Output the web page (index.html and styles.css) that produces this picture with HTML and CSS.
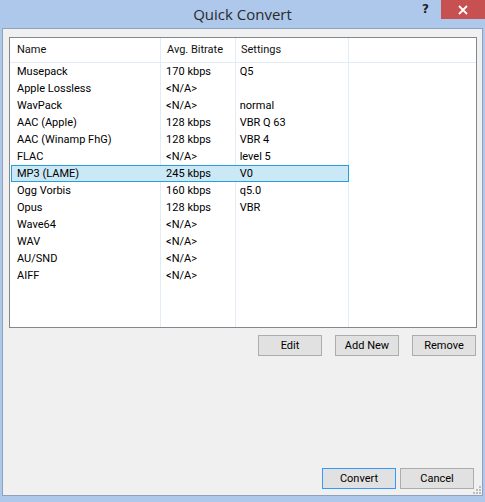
FILE: index.html
```html
<!DOCTYPE html>
<html>
<head>
<meta charset="utf-8">
<title>Quick Convert</title>
<link rel="stylesheet" href="styles.css">
</head>
<body>
<div class="window">
  <div class="titlebar">
    <div class="title">Quick Convert</div>
    <div class="controls">
      <span class="help">?</span>
      <span class="close">
        <svg width="10" height="10" viewBox="0 0 10 10"><path d="M1 1 L9 9 M9 1 L1 9" stroke="#fff" stroke-width="1.8" fill="none"/></svg>
      </span>
    </div>
  </div>
  <div class="client">
    <div class="list">
      <div class="row header">
        <div class="cell c1">Name</div>
        <div class="cell c2">Avg. Bitrate</div>
        <div class="cell c3">Settings</div>
      </div>
      <div class="row"><div class="cell c1">Musepack</div><div class="cell c2">170 kbps</div><div class="cell c3">Q5</div></div>
      <div class="row"><div class="cell c1">Apple Lossless</div><div class="cell c2">&lt;N/A&gt;</div><div class="cell c3"></div></div>
      <div class="row"><div class="cell c1">WavPack</div><div class="cell c2">&lt;N/A&gt;</div><div class="cell c3">normal</div></div>
      <div class="row"><div class="cell c1">AAC (Apple)</div><div class="cell c2">128 kbps</div><div class="cell c3">VBR Q 63</div></div>
      <div class="row"><div class="cell c1">AAC (Winamp FhG)</div><div class="cell c2">128 kbps</div><div class="cell c3">VBR 4</div></div>
      <div class="row"><div class="cell c1">FLAC</div><div class="cell c2">&lt;N/A&gt;</div><div class="cell c3">level 5</div></div>
      <div class="row selected"><div class="cell c1">MP3 (LAME)</div><div class="cell c2">245 kbps</div><div class="cell c3">V0</div></div>
      <div class="row"><div class="cell c1">Ogg Vorbis</div><div class="cell c2">160 kbps</div><div class="cell c3">q5.0</div></div>
      <div class="row"><div class="cell c1">Opus</div><div class="cell c2">128 kbps</div><div class="cell c3">VBR</div></div>
      <div class="row"><div class="cell c1">Wave64</div><div class="cell c2">&lt;N/A&gt;</div><div class="cell c3"></div></div>
      <div class="row"><div class="cell c1">WAV</div><div class="cell c2">&lt;N/A&gt;</div><div class="cell c3"></div></div>
      <div class="row"><div class="cell c1">AU/SND</div><div class="cell c2">&lt;N/A&gt;</div><div class="cell c3"></div></div>
      <div class="row"><div class="cell c1">AIFF</div><div class="cell c2">&lt;N/A&gt;</div><div class="cell c3"></div></div>
    </div>
    <div class="actions">
      <button class="btn">Edit</button>
      <button class="btn">Add New</button>
      <button class="btn">Remove</button>
    </div>
    <div class="footer">
      <button class="btn wide default">Convert</button>
      <button class="btn wide">Cancel</button>
    </div>
    <svg class="grip" width="10" height="10" viewBox="0 0 10 10">
      <rect x="7" y="1" width="2" height="2" fill="#bcbcbc"/>
      <rect x="4" y="4" width="2" height="2" fill="#bcbcbc"/>
      <rect x="7" y="4" width="2" height="2" fill="#bcbcbc"/>
      <rect x="1" y="7" width="2" height="2" fill="#bcbcbc"/>
      <rect x="4" y="7" width="2" height="2" fill="#bcbcbc"/>
      <rect x="7" y="7" width="2" height="2" fill="#bcbcbc"/>
    </svg>
  </div>
</div>
</body>
</html>
```
FILE: styles.css
```css
* { box-sizing: border-box; }
html, body { margin: 0; padding: 0; }
body {
  width: 485px;
  height: 502px;
  overflow: hidden;
  font-family: Roboto, "Liberation Sans", sans-serif;
  font-size: 11px;
  color: #000;
}
.window {
  width: 485px;
  height: 502px;
  background: #adc8ea;
  display: flex;
  flex-direction: column;
}
.titlebar {
  height: 28px;
  display: grid;
  grid-template-areas: "all";
  flex: none;
}
.title {
  grid-area: all;
  justify-self: center;
  align-self: center;
  font-family: "Open Sans", "Noto Sans", sans-serif;
  font-size: 15px;
  color: #2a2a2a;
  margin-top: -1px;
}
.controls {
  grid-area: all;
  justify-self: end;
  align-self: start;
  display: flex;
  align-items: flex-start;
}
.help {
  font-family: "DejaVu Sans", sans-serif;
  font-weight: bold;
  font-size: 12px;
  color: #222;
  line-height: 19px;
  margin-right: 12px;
}
.close {
  width: 44px;
  height: 19px;
  background: #c75050;
  display: flex;
  align-items: center;
  justify-content: center;
}
.client {
  flex: 1;
  margin: 0 2px 6px 2px;
  border: 1px solid #8fa2bb;
  background: #f0f0f0;
  display: flex;
  flex-direction: column;
  padding: 8px 5px 0 6px;
  position: relative;
}
.list {
  height: 291px;
  border: 1px solid #828790;
  background-color: #fff;
  background-image:
    linear-gradient(#e3ebf6, #e3ebf6),
    linear-gradient(#e3ebf6, #e3ebf6),
    linear-gradient(#e3ebf6, #e3ebf6);
  background-size: 1px 100%;
  background-repeat: no-repeat;
  background-position: 150px 0, 225px 0, 338px 0;
  flex: none;
}
.row {
  display: flex;
  height: 17px;
  width: 338px;
  margin-left: 1px;
  border: 1px solid transparent;
  line-height: 15px;
}
.row.header {
  height: 25px;
  width: auto;
  margin-left: 0;
  border: none;
  border-bottom: 1px solid #e3ebf6;
  line-height: 24px;
  padding-left: 1px;
  color: #111;
}
.row.selected {
  background: #cbe8f6;
  border-color: #26a0da;
}
.cell { white-space: nowrap; }
.c1 { width: 150px; padding-left: 5px; }
.c2 { width: 75px; padding-left: 5px; }
.c3 { width: 113px; padding-left: 4px; }
.row.header .c1 { padding-left: 6px; }
.row.header .c2 { padding-left: 6px; }
.row.header .c3 { padding-left: 5px; }
.actions {
  display: flex;
  justify-content: flex-end;
  gap: 13px;
  margin-top: 7px;
  margin-right: 1px;
}
.btn {
  width: 64px;
  height: 21px;
  background: #e1e1e1;
  border: 1px solid #adadad;
  border-radius: 0;
  font-family: Roboto, "Liberation Sans", sans-serif;
  font-size: 11px;
  color: #000;
  padding: 0;
  margin: 0;
}
.btn.wide { width: 74px; }
.btn.default { border-color: #3399ff; }
.footer {
  margin-top: auto;
  margin-bottom: 6px;
  margin-right: 3px;
  display: flex;
  justify-content: flex-end;
  gap: 4px;
}
.grip {
  position: absolute;
  right: 0;
  bottom: 0;
}
```
